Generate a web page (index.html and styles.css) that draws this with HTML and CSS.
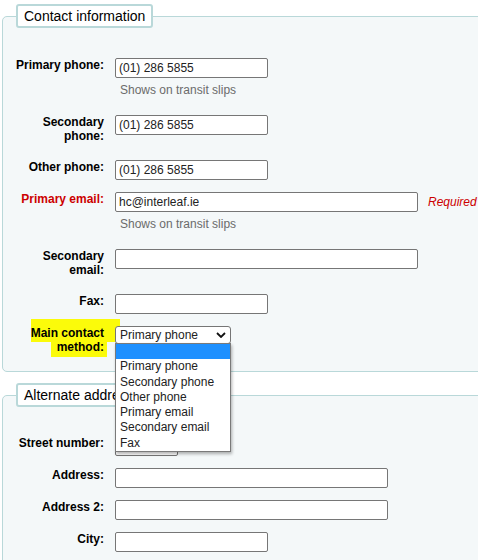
FILE: index.html
```html
<!DOCTYPE html>
<html lang="en">
<head>
<meta charset="utf-8">
<title>Contact information</title>
<link rel="stylesheet" href="styles.css">
</head>
<body>
<fieldset class="rows first">
  <legend>Contact information</legend>
  <ol>
    <li class="row">
      <label>Primary phone:</label>
      <div class="field">
        <div class="inputline"><input class="w153" type="text" value="(01) 286 5855"></div>
        <div class="hint">Shows on transit slips</div>
      </div>
    </li>
    <li class="row">
      <label>Secondary phone:</label>
      <div class="field">
        <div class="inputline"><input class="w153" type="text" value="(01) 286 5855"></div>
      </div>
    </li>
    <li class="row">
      <label>Other phone:</label>
      <div class="field">
        <div class="inputline"><input class="w153" type="text" value="(01) 286 5855"></div>
      </div>
    </li>
    <li class="row">
      <label class="required">Primary email:</label>
      <div class="field">
        <div class="inputline"><input class="w303" type="text" value="hc@interleaf.ie"><span class="req">Required</span></div>
        <div class="hint">Shows on transit slips</div>
      </div>
    </li>
    <li class="row">
      <label>Secondary email:</label>
      <div class="field">
        <div class="inputline"><input class="w303" type="text" value=""></div>
      </div>
    </li>
    <li class="row">
      <label>Fax:</label>
      <div class="field">
        <div class="inputline"><input class="w153" type="text" value=""></div>
      </div>
    </li>
    <li class="row">
      <label><span class="hl hl1">Main contact</span><br><span class="hl hl2">method:</span></label>
      <div class="field">
        <div class="select">
          <span class="select-value">Primary phone</span>
          <svg class="chevron" width="10" height="6" viewBox="0 0 10 6"><path d="M1 1 L5 5 L9 1" fill="none" stroke="#111" stroke-width="1.8"/></svg>
          <ul class="dropdown">
            <li class="opt selected">&nbsp;</li>
            <li class="opt">Primary phone</li>
            <li class="opt">Secondary phone</li>
            <li class="opt">Other phone</li>
            <li class="opt">Primary email</li>
            <li class="opt">Secondary email</li>
            <li class="opt">Fax</li>
          </ul>
        </div>
      </div>
    </li>
  </ol>
</fieldset>

<fieldset class="rows second">
  <legend>Alternate address</legend>
  <ol>
    <li class="row">
      <label>Street number:</label>
      <div class="field">
        <div class="inputline"><input class="w63" type="text" value=""></div>
      </div>
    </li>
    <li class="row">
      <label>Address:</label>
      <div class="field">
        <div class="inputline"><input class="w273" type="text" value=""></div>
      </div>
    </li>
    <li class="row">
      <label>Address 2:</label>
      <div class="field">
        <div class="inputline"><input class="w273" type="text" value=""></div>
      </div>
    </li>
    <li class="row">
      <label>City:</label>
      <div class="field">
        <div class="inputline"><input class="w153" type="text" value=""></div>
      </div>
    </li>
  </ol>
</fieldset>
</body>
</html>
```

FILE: styles.css
```css
html, body {
  margin: 0;
  padding: 0;
  overflow: hidden;
  background: #fff;
}

body {
  font-family: "Liberation Sans", Arial, sans-serif;
  font-size: 12px;
  color: #000;
}

fieldset.rows {
  margin: 4px 0 0 2px;
  width: 560px;
  box-sizing: border-box;
  padding: 29px 0 1px 0;
  border: 1px solid #b9d8d9;
  border-radius: 5px;
  background: #f4f8f9;
}

fieldset.second {
  margin-top: 11px;
  padding-top: 28px;
}

fieldset.rows legend {
  margin-left: 13px;
  padding: 0 6px;
  border: 2px solid #b9d8d9;
  border-radius: 3px;
  background: #fff;
  font-size: 14px;
  line-height: 20px;
  color: #000;
}

fieldset.rows ol {
  list-style: none;
  margin: 0;
  padding: 0;
}

.row {
  display: flex;
  align-items: flex-start;
  padding: 0 0 11px 7px;
}

.row > label {
  flex: none;
  width: 94px;
  margin-right: 11px;
  padding: 1px 0 5px 0;
  text-align: right;
  font-weight: bold;
  line-height: 14px;
}

.row > label.required {
  color: #cc0000;
}

.hl {
  background: #fbfb0a;
}

.hl1 {
  padding: 7px 16px 2px 0;
  margin-right: -16px;
}

.hl2 {
  padding: 0 3px 3px 6px;
  margin-right: -3px;
}

.field {
  margin-top: 1px;
}

.inputline {
  display: flex;
  align-items: center;
  height: 20px;
}

.inputline input {
  box-sizing: border-box;
  height: 20px;
  margin: 0;
  padding: 0 3px;
  border: 1px solid #767676;
  border-radius: 2px;
  background: #fff;
  font-family: "Liberation Sans", Arial, sans-serif;
  font-size: 12px;
  color: #222;
}

.w63 { width: 63px; }
.w153 { width: 153px; }
.w273 { width: 273px; }
.w303 { width: 303px; }

.req {
  margin-left: 10px;
  color: #cc0000;
  font-style: italic;
}

.hint {
  margin: 4px 0 5px 5px;
  line-height: 16px;
  color: #6b6b6b;
}

.select {
  position: relative;
  box-sizing: border-box;
  width: 116px;
  height: 18px;
  display: flex;
  align-items: center;
  padding: 0 4px;
  border: 1px solid #767676;
  border-radius: 3px;
  background: #fff;
  color: #222;
}

.select-value {
  flex: 1;
  line-height: 16px;
}

.chevron {
  flex: none;
}

.dropdown {
  position: absolute;
  left: -1px;
  top: 16px;
  z-index: 10;
  width: 116px;
  box-sizing: border-box;
  margin: 0;
  padding: 0;
  list-style: none;
  border: 1px solid #7a7a7a;
  background: #fff;
  box-shadow: 1px 2px 3px rgba(0, 0, 0, 0.3);
}

.opt {
  height: 15.3px;
  line-height: 15.3px;
  padding-left: 4px;
  color: #222;
  white-space: nowrap;
}

.opt.selected {
  background: #1e90ff;
}
```
